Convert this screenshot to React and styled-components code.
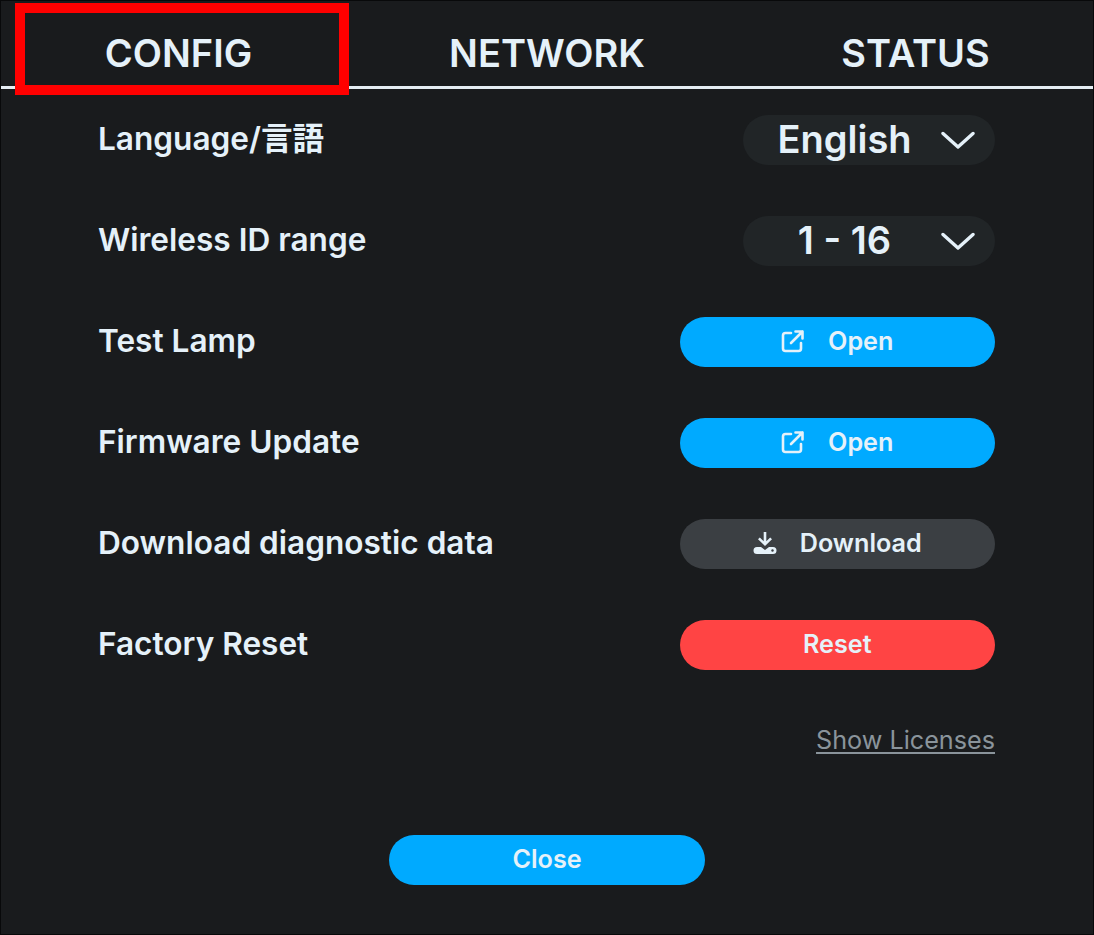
import React from 'react';
import styled, { createGlobalStyle } from 'styled-components';

const TAB_NAMES = ['CONFIG', 'NETWORK', 'STATUS'];

const GlobalStyle = createGlobalStyle`
  html, body {
    margin: 0;
    padding: 0;
    background: #191b1d;
  }
  * {
    box-sizing: border-box;
  }
`;

const Page = styled.div`
  position: relative;
  width: 1094px;
  height: 935px;
  overflow: hidden;
  background: #191b1d;
  border: 1px solid #08090a;
  color: #e5f1f9;
  font-family: Inter, "Noto Sans CJK JP", sans-serif;
`;

const TabBar = styled.nav`
  display: grid;
  grid-template-columns: repeat(3, 368.5px);
  justify-content: center;
  height: 88px;
  border-bottom: 3px solid #e5edf3;
`;

const Tab = styled.div`
  display: flex;
  align-items: center;
  justify-content: center;
  padding-top: 19px;
  font-size: 38px;
  font-weight: 600;
  line-height: 1;
`;

const Highlight = styled.div`
  position: absolute;
  left: 14px;
  top: 2px;
  width: 334px;
  height: 92px;
  border: 10px solid #ff0000;
`;

const Settings = styled.div`
  display: flex;
  flex-direction: column;
  gap: 51px;
  padding: 26px 98px 0 97px;
`;

const Row = styled.div`
  display: flex;
  align-items: center;
  justify-content: space-between;
  height: 50px;
`;

const Label = styled.span`
  padding-bottom: 2px;
  font-size: 31.6px;
  font-weight: 600;
  line-height: 1;
`;

const Select = styled.div`
  display: flex;
  align-items: center;
  width: 252px;
  height: 50px;
  padding-right: 20px;
  border-radius: 25px;
  background: #212527;
  font-size: 38px;
  font-weight: 600;
`;

const SelectValue = styled.span`
  flex: 1;
  padding: 0 0 2px 5px;
  text-align: center;
`;

const Button = styled.button`
  display: flex;
  align-items: center;
  justify-content: center;
  gap: 23px;
  width: 315.5px;
  height: 50px;
  padding: 0 0 2px;
  border: 0;
  border-radius: 25px;
  background: ${(props) => props.$bg};
  color: ${(props) => props.$fg || '#e5f1f9'};
  font-family: inherit;
  font-size: 25.2px;
  font-weight: 600;
`;

const Footer = styled.div`
  display: flex;
  justify-content: flex-end;
  padding: 52px 98px 0;
`;

const LicenseLink = styled.a`
  color: #8a949b;
  font-size: 25.2px;
  font-weight: 400;
  line-height: 36px;
  text-decoration: underline;
  text-underline-offset: 3px;
`;

const CloseWrap = styled.div`
  display: flex;
  justify-content: center;
  padding-top: 77px;
`;

const Chevron = () => (
  <svg width="34" height="20" viewBox="0 0 34 20" fill="none" stroke="#e5f1f9" strokeWidth="3.4" strokeLinecap="round" strokeLinejoin="round">
    <path d="M2 3.5 L17 17 L32 3.5" />
  </svg>
);

const OpenIcon = () => (
  <svg width="24" height="24" viewBox="0 0 24 24" fill="none" stroke="#e5f1f9" strokeWidth="2.6" strokeLinecap="round" strokeLinejoin="round">
    <path d="M10 4 H4.5 A2.5 2.5 0 0 0 2 6.5 V19.5 A2.5 2.5 0 0 0 4.5 22 H17.5 A2.5 2.5 0 0 0 20 19.5 V14" />
    <path d="M10 14 L21.5 2.5 M14.5 2.5 H21.5 V9.5" />
  </svg>
);

const DownloadIcon = () => (
  <svg width="24" height="24" viewBox="0 0 24 24" fill="#e5f1f9">
    <path d="M10.7 1 H13.3 V10.2 L17.2 6.4 L19 8.2 L12 15 L5 8.2 L6.8 6.4 L10.7 10.2 Z" />
    <path d="M4 16 H8 L12 19 L16 16 H20 A3.5 3.5 0 0 1 20 23 H4 A3.5 3.5 0 0 1 4 16 Z" />
    <circle cx="19.5" cy="19.5" r="1.2" fill="#3b3f43" />
  </svg>
);

function App() {
  return (
    <Page>
      <GlobalStyle />
      <TabBar>
        {TAB_NAMES.map((name) => (
          <Tab key={name}>{name}</Tab>
        ))}
      </TabBar>
      <Highlight />
      <Settings>
        <Row>
          <Label>Language/言語</Label>
          <Select>
            <SelectValue>English</SelectValue>
            <Chevron />
          </Select>
        </Row>
        <Row>
          <Label>Wireless ID range</Label>
          <Select>
            <SelectValue>1 - 16</SelectValue>
            <Chevron />
          </Select>
        </Row>
        <Row>
          <Label>Test Lamp</Label>
          <Button $bg="#00aaff">
            <OpenIcon />
            Open
          </Button>
        </Row>
        <Row>
          <Label>Firmware Update</Label>
          <Button $bg="#00aaff">
            <OpenIcon />
            Open
          </Button>
        </Row>
        <Row>
          <Label>Download diagnostic data</Label>
          <Button $bg="#3b3f43">
            <DownloadIcon />
            Download
          </Button>
        </Row>
        <Row>
          <Label>Factory Reset</Label>
          <Button $bg="#ff4444">Reset</Button>
        </Row>
      </Settings>
      <Footer>
        <LicenseLink>Show Licenses</LicenseLink>
      </Footer>
      <CloseWrap>
        <Button $bg="#00aaff">Close</Button>
      </CloseWrap>
    </Page>
  );
}

export default App;
